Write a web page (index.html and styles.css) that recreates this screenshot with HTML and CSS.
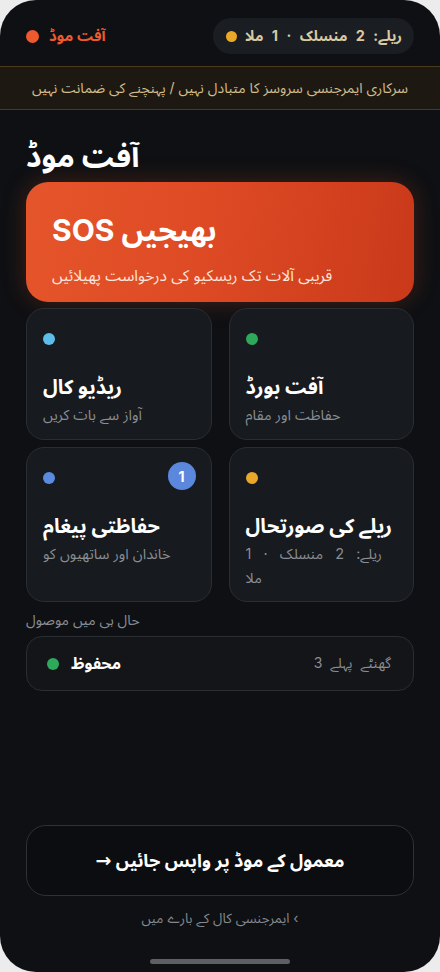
FILE: index.html
```html
<!DOCTYPE html>
<html lang="ur">
<head>
  <meta charset="UTF-8" />
  <meta name="viewport" content="width=device-width, initial-scale=1.0"/>
  <title>آفت موڈ</title>
  <link rel="stylesheet" href="styles.css">
</head>
<body>
  <div class="phone">
    <header class="topbar">
      <div class="mode">
        <span class="dot dot-red"></span>
        <span class="mode-label" dir="rtl">آفت موڈ</span>
      </div>
      <div class="relay-pill">
        <span class="dot dot-amber"></span>
        <span dir="rtl">ریلے: 2 منسلک · 1 ملا</span>
      </div>
    </header>

    <div class="warning" dir="rtl">سرکاری ایمرجنسی سروسز کا متبادل نہیں / پہنچنے کی ضمانت نہیں</div>

    <main class="content">
      <h1 class="title" dir="rtl">آفت موڈ</h1>

      <button class="sos">
        <span class="sos-title" dir="rtl">بھیجیں SOS</span>
        <span class="sos-sub" dir="rtl">قریبی آلات تک ریسکیو کی درخواست پھیلائیں</span>
      </button>

      <div class="grid">
        <div class="card">
          <div class="card-top"><span class="dot dot-sky"></span></div>
          <div class="card-title" dir="rtl">ریڈیو کال</div>
          <div class="card-sub" dir="rtl">آواز سے بات کریں</div>
        </div>
        <div class="card">
          <div class="card-top"><span class="dot dot-green"></span></div>
          <div class="card-title" dir="rtl">آفت بورڈ</div>
          <div class="card-sub" dir="rtl">حفاظت اور مقام</div>
        </div>
        <div class="card card-tall">
          <div class="card-top">
            <span class="dot dot-blue"></span>
            <span class="badge">1</span>
          </div>
          <div class="card-title" dir="rtl">حفاظتی پیغام</div>
          <div class="card-sub" dir="rtl">خاندان اور ساتھیوں کو</div>
        </div>
        <div class="card card-tall">
          <div class="card-top"><span class="dot dot-amber"></span></div>
          <div class="card-title" dir="rtl">ریلے کی صورتحال</div>
          <div class="card-sub spaced" dir="rtl">ریلے: 2 منسلک · 1 ملا</div>
        </div>
      </div>

      <div class="section-label" dir="rtl">حال ہی میں موصول</div>
      <div class="received">
        <div class="received-name">
          <span class="dot dot-green"></span>
          <span dir="rtl">محفوظ</span>
        </div>
        <span class="received-time">3 گھنٹے پہلے</span>
      </div>
    </main>

    <footer class="bottom">
      <button class="back-btn" dir="rtl">معمول کے موڈ پر واپس جائیں <span class="arrow">→</span></button>
      <a class="about" href="#" dir="rtl">› ایمرجنسی کال کے بارے میں</a>
      <div class="home-bar"></div>
    </footer>
  </div>
</body>
</html>
```

FILE: styles.css
```css
* {
  box-sizing: border-box;
  font-family: 'Inter', 'Noto Sans Arabic', 'Noto Sans', sans-serif;
}

body {
  margin: 0;
  background: #ececec;
}

.phone {
  width: 440px;
  height: 972px;
  background: #0e1013;
  border-radius: 36px;
  overflow: hidden;
  display: flex;
  flex-direction: column;
  color: #fff;
}

.dot {
  display: inline-block;
  width: 12px;
  height: 12px;
  border-radius: 50%;
  flex-shrink: 0;
}

.dot-red { background: #ee5a2f; }
.dot-amber { background: #e9a82a; }
.dot-sky { background: #5bbde8; }
.dot-green { background: #2ea85a; }
.dot-blue { background: #5b8be0; }

.topbar {
  display: flex;
  justify-content: space-between;
  align-items: center;
  padding: 18px 26px 0 26px;
  height: 54px;
}

.mode {
  display: flex;
  align-items: center;
  gap: 10px;
  color: #ee5a2f;
  font-weight: bold;
  font-size: 15px;
}

.mode .dot {
  width: 13px;
  height: 13px;
}

.relay-pill {
  display: flex;
  align-items: center;
  gap: 8px;
  background: #1a1d21;
  border-radius: 18px;
  height: 36px;
  padding: 0 12px 0 13px;
  color: #d8c9a4;
  font-size: 14.5px;
  font-weight: bold;
  word-spacing: 5px;
}

.relay-pill .dot {
  width: 11px;
  height: 11px;
}

.warning {
  margin-top: 12px;
  height: 44px;
  display: flex;
  align-items: center;
  justify-content: center;
  background: #1d1912;
  border-top: 1px solid #4a3a1e;
  border-bottom: 1px solid #4a3a1e;
  color: #d3bd8c;
  font-size: 14px;
}

.content {
  padding: 0 26px;
  flex: 1;
}

.title {
  margin: 26px 0 6px;
  font-size: 30px;
  font-weight: bold;
  line-height: 40px;
  text-align: left;
}

.sos {
  width: 100%;
  height: 120px;
  border: none;
  border-radius: 22px;
  background: linear-gradient(100deg, #e5552b 0%, #de4a24 45%, #c9391a 100%);
  box-shadow: 0 0 24px rgba(228, 83, 43, 0.25);
  display: flex;
  flex-direction: column;
  align-items: flex-start;
  padding: 26px 26px 0;
  color: #fff;
  cursor: pointer;
}

.sos-title {
  font-size: 30px;
  font-weight: bold;
  line-height: 44px;
}

.sos-sub {
  margin-top: 8px;
  font-size: 15.5px;
  color: #ffe6dc;
}

.grid {
  display: grid;
  grid-template-columns: 1fr 1fr;
  column-gap: 17px;
  row-gap: 7px;
  margin-top: 6px;
}

.card {
  background: #171a1e;
  border: 1px solid #2a2d32;
  border-radius: 18px;
  padding: 22px 15px 16px 16px;
  height: 132px;
  text-align: left;
}

.card-tall {
  height: 155px;
}

.card-top {
  display: flex;
  justify-content: space-between;
  align-items: flex-start;
  height: 30px;
}

.card-top .dot {
  margin-top: 2px;
}

.badge {
  width: 28px;
  height: 28px;
  border-radius: 50%;
  background: #5b87dc;
  color: #fff;
  font-size: 14px;
  font-weight: bold;
  display: flex;
  align-items: center;
  justify-content: center;
  margin-top: -8px;
}

.card-title {
  margin-top: 10px;
  font-size: 20px;
  font-weight: bold;
  line-height: 32px;
  text-align: left;
}

.card-sub {
  font-size: 14.5px;
  color: #8a8d93;
  line-height: 24px;
  text-align: left;
}

.card-sub.spaced {
  word-spacing: 8px;
}

.section-label {
  margin-top: 8px;
  font-size: 14px;
  color: #8a8d93;
  text-align: left;
  line-height: 20px;
}

.received {
  margin-top: 6px;
  height: 55px;
  border: 1px solid #2a2d32;
  border-radius: 16px;
  background: #131519;
  display: flex;
  justify-content: space-between;
  align-items: center;
  padding: 0 22px 0 20px;
}

.received-name {
  display: flex;
  align-items: center;
  gap: 12px;
  font-size: 16px;
  font-weight: bold;
}

.received-time {
  font-size: 14px;
  color: #8a8d93;
  word-spacing: 4px;
}

.bottom {
  padding: 0 26px;
  display: flex;
  flex-direction: column;
  align-items: center;
}

.back-btn {
  width: 100%;
  height: 71px;
  background: #0c0d10;
  border: 1px solid #2e3136;
  border-radius: 20px;
  color: #fff;
  font-size: 18px;
  font-weight: bold;
  cursor: pointer;
}

.arrow {
  font-family: 'DejaVu Sans', sans-serif;
  font-size: 19px;
}

.about {
  margin-top: 8px;
  font-size: 13.5px;
  color: #85888e;
  text-decoration: none;
}

.home-bar {
  margin: 26px 0 8px;
  width: 140px;
  height: 5px;
  border-radius: 3px;
  background: #5e5f62;
}
```
